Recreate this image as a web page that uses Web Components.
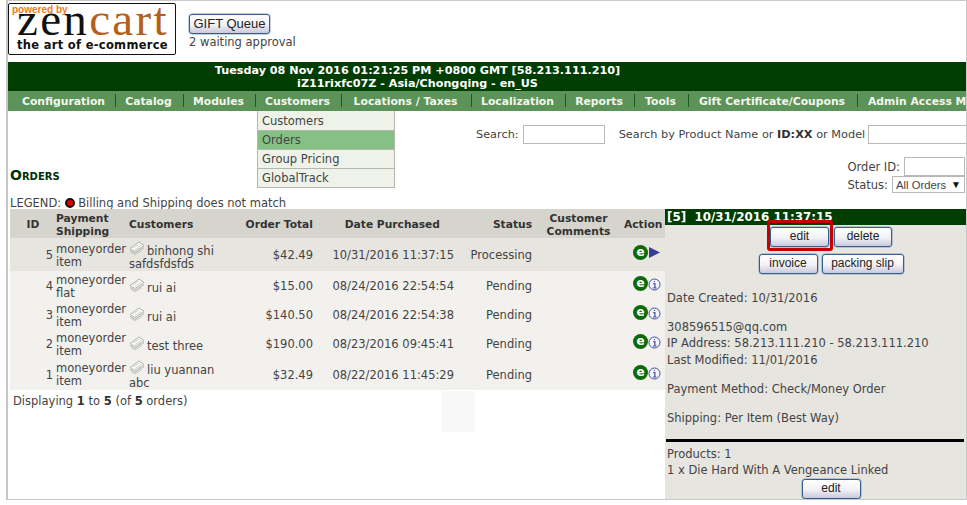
<!DOCTYPE html>
<html lang="en">
  <head>
    <meta charset="UTF-8" />
    <title>Orders</title>
    <style>
      body {
        margin: 0;
        background: #fff;
        font-family: "DejaVu Sans", sans-serif;
        font-size: 11.5px;
        color: #444;
        --cols: 46px 73px 100px 87px 141px 78px 89px 40px;
      }
    </style>
  </head>
  <body>
    <zc-page>
      <zc-header slot="header"></zc-header>
      <zc-status slot="header">
        <div>Tuesday 08 Nov 2016 01:21:25 PM +0800 GMT [58.213.111.210]</div>
        <div>iZ11rixfc07Z - Asia/Chongqing - en_US</div>
      </zc-status>
      <zc-nav slot="header"></zc-nav>
      <zc-filters slot="header"></zc-filters>
      <zc-orders slot="left">
        <zc-row oid="5" pay="moneyorder" ship="item" total="$42.49" date="10/31/2016 11:37:15" status="Processing" icon="arrow" selected style="height:33px">binhong shi safdsfdsfds</zc-row>
        <zc-row oid="4" pay="moneyorder" ship="flat" total="$15.00" date="08/24/2016 22:54:54" status="Pending" style="height:29px">rui ai</zc-row>
        <zc-row oid="3" pay="moneyorder" ship="item" total="$140.50" date="08/24/2016 22:54:38" status="Pending" style="height:29px">rui ai</zc-row>
        <zc-row oid="2" pay="moneyorder" ship="item" total="$190.00" date="08/23/2016 09:45:41" status="Pending" style="height:29px">test three</zc-row>
        <zc-row oid="1" pay="moneyorder" ship="item" total="$32.49" date="08/22/2016 11:45:29" status="Pending" style="height:32px">liu yuannan abc</zc-row>
      </zc-orders>
      <zc-side slot="right"></zc-side>
    </zc-page>

    <template id="page-template">
      <style>
        :host {
          display: block;
          position: relative;
          box-sizing: border-box;
          width: 961px;
          height: 500px;
          margin-left: 6px;
          border: 1px solid #c8c8c8;
          border-width: 1px 1px 1px 2px;
          overflow: hidden;
        }
        .main {
          display: flex;
          align-items: flex-start;
          padding-left: 2px;
        }
        .left {
          flex: 0 0 655px;
        }
        .right {
          flex: 0 0 332px;
        }
        .patch {
          position: absolute;
          left: 434px;
          top: 390px;
          width: 33px;
          height: 41px;
          background: #f8f8f8;
        }
      </style>
      <slot name="header"></slot>
      <div class="main">
        <div class="left"><slot name="left"></slot></div>
        <div class="right"><slot name="right"></slot></div>
      </div>
      <div class="patch"></div>
    </template>

    <template id="button-template">
      <style>
        :host {
          display: inline-block;
          box-sizing: border-box;
          height: 20px;
          line-height: 17px;
          text-align: center;
          border: 1px solid #33618f;
          border-radius: 3px;
          background: linear-gradient(#ffffff, #f1f1f6 55%, #c9c9dc);
          box-shadow: 0 0 0 0.5px #8aa0b8;
          font-family: "Liberation Sans", sans-serif;
          font-size: 12px;
          color: #222;
        }
      </style>
      <slot></slot>
    </template>

    <template id="header-template">
      <style>
        :host {
          display: flex;
          height: 61px;
          box-sizing: border-box;
          padding: 2px 0 0 0;
          gap: 13px;
        }
        .logo {
          position: relative;
          box-sizing: border-box;
          width: 168px;
          height: 52px;
          border: 1px solid #111;
          border-radius: 2px;
          overflow: hidden;
          background: #fff;
        }
        .by {
          position: absolute;
          left: 3px;
          top: 0;
          font: bold 10px "Liberation Sans", sans-serif;
          color: #ef7a22;
        }
        .word {
          position: absolute;
          left: 8px;
          top: -12px;
          font: 47px "Liberation Serif", serif;
          letter-spacing: 2.3px;
          color: #111;
          white-space: nowrap;
        }
        .word span {
          color: #b4601a;
        }
        .tag {
          position: absolute;
          left: 8px;
          top: 34px;
          font: bold 11.5px "DejaVu Sans", sans-serif;
          letter-spacing: 0.3px;
          color: #111;
          white-space: nowrap;
        }
        .gift {
          padding-top: 11px;
        }
        zc-button {
          width: 81px;
          display: block;
          font-size: 13px;
        }
        .wait {
          margin-top: 1px;
        }
      </style>
      <div class="logo">
        <div class="word">zen<span>cart</span></div>
        <div class="by">powered by</div>
        <div class="tag">the art of e-commerce</div>
      </div>
      <div class="gift">
        <zc-button>GIFT Queue</zc-button>
        <div class="wait">2 waiting approval</div>
      </div>
    </template>

    <template id="status-template">
      <style>
        :host {
          display: block;
          box-sizing: border-box;
          height: 29px;
          padding: 3px 139px 0 0;
          background: #003d00;
          color: #fff;
          font-weight: bold;
          font-size: 11.2px;
          line-height: 12.5px;
          text-align: center;
        }
      </style>
      <slot></slot>
    </template>

    <template id="nav-template">
      <style>
        :host {
          display: flex;
          position: relative;
          height: 20px;
          background: #5b9359;
          white-space: nowrap;
          color: #f2f7ee;
          font-weight: bold;
          font-size: 10.8px;
          line-height: 21px;
        }
        .item {
          flex: none;
          box-sizing: border-box;
          padding-right: 3px;
          text-align: center;
          position: relative;
        }
        .item + .item::before {
          content: "";
          position: absolute;
          left: -1px;
          top: 3px;
          bottom: 4px;
          width: 1px;
          background: #1f5a1f;
        }
        .menu {
          position: absolute;
          left: 249px;
          top: 20px;
          width: 138px;
          z-index: 2;
          box-sizing: border-box;
          padding-top: 1px;
          border: 1px solid #b5b8ae;
          border-top: 0;
          color: #444;
          font-weight: normal;
          font-size: 11.5px;
          background: #eef2e8;
        }
        .menu div {
          height: 18px;
          line-height: 18px;
          padding-left: 4px;
          border-bottom: 1px solid #b5b8ae;
        }
        .menu div:last-child {
          border-bottom: 0;
        }
        .menu .on {
          background: #85c085;
        }
      </style>
      <span class="item" style="width:108px;padding-right:0;padding-left:3px">Configuration</span>
      <span class="item" style="width:68px">Catalog</span>
      <span class="item" style="width:72px">Modules</span>
      <span class="item" style="width:86px">Customers</span>
      <span class="item" style="width:130px">Locations / Taxes</span>
      <span class="item" style="width:94px">Localization</span>
      <span class="item" style="width:69px">Reports</span>
      <span class="item" style="width:54px">Tools</span>
      <span class="item" style="width:169px">Gift Certificate/Coupons</span>
      <span class="item" style="padding:0 0 0 10px">Admin Access Management</span>
      <div class="menu">
        <div>Customers</div>
        <div class="on">Orders</div>
        <div>Group Pricing</div>
        <div>GlobalTrack</div>
      </div>
    </template>

    <template id="filters-template">
      <style>
        :host {
          display: block;
          box-sizing: border-box;
          height: 98px;
          padding-top: 14px;
          padding-left: 2px;
        }
        input {
          box-sizing: border-box;
          height: 19px;
          margin: 0;
          padding: 0;
          border: 1px solid #b8b8b8;
          background: #fff;
        }
        .search {
          display: flex;
          align-items: center;
          white-space: nowrap;
          font-size: 11.3px;
        }
        .search .a {
          margin-left: 466px;
          margin-right: 4px;
        }
        .search .b {
          margin-left: 14px;
          margin-right: 3px;
        }
        .search input {
          flex: none;
        }
        .search b {
          color: #333;
        }
        .low {
          display: flex;
          justify-content: space-between;
          margin-top: 13px;
          height: 36px;
        }
        h1 {
          margin: 10px 0 0;
          font: bold small-caps 14px "DejaVu Sans", sans-serif;
          color: #003000;
        }
        .right {
          display: flex;
          flex-direction: column;
          align-items: flex-end;
          width: 118px;
          flex: none;
          margin-right: 1px;
        }
        .line {
          display: flex;
          align-items: center;
          height: 19px;
          white-space: nowrap;
        }
        .line span {
          margin-right: 4px;
        }
        .select {
          box-sizing: border-box;
          display: flex;
          justify-content: space-between;
          align-items: center;
          width: 73px;
          height: 17px;
          padding: 0 3px;
          border: 1px solid #b8b8b8;
          font: 11.3px "Liberation Sans", sans-serif;
        }
        .select i {
          font-style: normal;
          font-size: 10px;
          color: #111;
        }
        .legend {
          display: flex;
          align-items: center;
          margin-top: 3px;
          height: 14px;
          white-space: nowrap;
        }
        .dot {
          width: 6px;
          height: 6px;
          margin: 0 3px 0 4px;
          border-radius: 50%;
          background: #e00000;
          border: 2px solid #111;
        }
      </style>
      <div class="search">
        <span class="a">Search:</span><input style="width:82px" />
        <span class="b">Search by Product Name or <b>ID:XX</b> or Model</span><input style="width:120px" />
      </div>
      <div class="low">
        <h1>Orders</h1>
        <div class="right">
          <div class="line"><span>Order ID:</span><input style="width:61px" /></div>
          <div class="line"><span>Status:</span><div class="select">All Orders<i>▼</i></div></div>
        </div>
      </div>
      <div class="legend">LEGEND:<span class="dot"></span>Billing and Shipping does not match</div>
    </template>

    <template id="orders-template">
      <style>
        :host {
          display: block;
        }
        .head {
          display: grid;
          grid-template-columns: var(--cols);
          align-items: center;
          box-sizing: border-box;
          height: 29px;
          padding-top: 2px;
          background: #d6d5cd;
          color: #333;
          font-weight: bold;
          font-size: 10.7px;
          line-height: 13px;
        }
        .c {
          text-align: center;
        }
        .r {
          text-align: right;
          padding-right: 3px;
        }
        .foot {
          margin: 4px 0 0 3px;
          line-height: 14px;
        }
        .foot b {
          color: #333;
        }
      </style>
      <div class="head">
        <div class="c">ID</div>
        <div>Payment<br />Shipping</div>
        <div>Customers</div>
        <div class="r">Order Total</div>
        <div class="r" style="padding-right:17px">Date Purchased</div>
        <div class="r">Status</div>
        <div class="c" style="padding-right:2px">Customer<br />Comments</div>
        <div class="c" style="padding-right:7px;white-space:nowrap">Action</div>
      </div>
      <slot></slot>
      <div class="foot">Displaying <b>1</b> to <b>5</b> (of <b>5</b> orders)</div>
    </template>

    <template id="row-template">
      <style>
        :host {
          display: grid;
          grid-template-columns: var(--cols);
          align-items: center;
          box-sizing: border-box;
          padding-top: 2px;
          background: #f2f1ee;
          line-height: 13px;
          white-space: nowrap;
        }
        :host([selected]) {
          background: #e6e5e0;
        }
        .r {
          text-align: right;
          padding-right: 3px;
        }
        .id {
          padding-right: 3px;
        }
        .cust {
          white-space: normal;
        }
        .cust svg {
          vertical-align: -1px;
          margin-right: 2px;
        }
        .act {
          display: flex;
          align-items: flex-start;
          padding: 0 0 6px 9px;
        }
        .e {
          width: 15px;
          height: 15px;
          border-radius: 50%;
          background: #0b6b0b;
          color: #fff;
          font: bold 12px/14px "DejaVu Sans", sans-serif;
          text-align: center;
        }
        .mark {
          margin-top: 2px;
        }
      </style>
      <div class="r id"></div>
      <div class="pay"></div>
      <div class="cust">
        <svg width="16" height="15" viewBox="0 0 16 15" fill="#fff" stroke="#b0b0aa" stroke-width="1">
          <path d="M1 7.5 L10 1 L15 4.5 L6 10.5 Z" />
          <path d="M1 9.5 L6 12.5 L15 6.5" fill="none" />
          <path d="M2 11.5 L6 14 L13 9.5" fill="none" stroke="#cfcfc9" />
          <path d="M4 7 L10 3 M6 8.5 L12 4.5" fill="none" stroke="#cfcfc9" />
        </svg><slot></slot>
      </div>
      <div class="r total"></div>
      <div class="r date"></div>
      <div class="r status"></div>
      <div></div>
      <div class="act">
        <div class="e">e</div>
        <span class="mark"></span>
      </div>
    </template>

    <template id="side-template">
      <style>
        :host {
          display: block;
          box-sizing: border-box;
          height: 292px;
          background: #e6e5e0;
          line-height: 16.5px;
        }
        .title {
          height: 16px;
          padding-left: 2px;
          background: #003d00;
          color: #fff;
          font-weight: bold;
          font-size: 11.9px;
          line-height: 17px;
          white-space: pre;
        }
        .btns {
          position: relative;
          display: flex;
          justify-content: center;
          gap: 5px;
          height: 25px;
          padding-top: 2px;
          box-sizing: border-box;
        }
        .btns.one {
          height: 27px;
        }
        .btns.two {
          gap: 4px;
        }
        .mark {
          position: absolute;
          left: 102px;
          top: -5px;
          width: 66px;
          height: 31px;
          box-sizing: border-box;
          border: 3px solid #c40000;
          border-radius: 3px;
        }
        .p {
          padding-left: 2px;
        }
        .gap {
          margin-top: 12px;
        }
        .rule {
          height: 3px;
          margin: 13px 2px 4px 1px;
          width: 298px;
          background: #000;
        }
        .small {
          line-height: 16px;
        }
      </style>
      <div class="title">[5]  10/31/2016 11:37:15</div>
      <div class="btns one">
        <zc-button style="width:59px">edit</zc-button>
        <zc-button style="width:58px">delete</zc-button>
        <div class="mark"></div>
      </div>
      <div class="btns two">
        <zc-button style="width:59px">invoice</zc-button>
        <zc-button style="width:82px">packing slip</zc-button>
      </div>
      <div class="p" style="margin-top:13px">Date Created: 10/31/2016</div>
      <div class="p gap">308596515@qq.com</div>
      <div class="p">IP Address: 58.213.111.210 - 58.213.111.210</div>
      <div class="p">Last Modified: 11/01/2016</div>
      <div class="p" style="margin-top:13px">Payment Method: Check/Money Order</div>
      <div class="p gap">Shipping: Per Item (Best Way)</div>
      <div class="rule"></div>
      <div class="p small">Products: 1</div>
      <div class="p small">1 x Die Hard With A Vengeance Linked</div>
      <div class="btns" style="padding-top:1px">
        <zc-button style="width:59px">edit</zc-button>
      </div>
    </template>

    <script>
      // every element just clones its template into an open shadow root
      class TemplateElement extends HTMLElement {
        constructor() {
          super();
          this.attachShadow({ mode: "open" });
          const template = document.getElementById(this.constructor.templateId);
          this.shadowRoot.appendChild(template.content.cloneNode(true));
        }
      }

      const plain = (name, id) => {
        customElements.define(
          name,
          class extends TemplateElement {
            static templateId = id;
          }
        );
      };

      plain("zc-page", "page-template");
      plain("zc-button", "button-template");
      plain("zc-header", "header-template");
      plain("zc-status", "status-template");
      plain("zc-nav", "nav-template");
      plain("zc-filters", "filters-template");
      plain("zc-orders", "orders-template");
      plain("zc-side", "side-template");

      const ARROW =
        '<svg width="12" height="11" viewBox="0 0 12 11" style="display:block;margin-left:1px"><path d="M0 0 L11 5.5 L0 11 Z" fill="#3a3a92"/></svg>';
      const INFO =
        '<svg width="13" height="13" viewBox="0 0 13 13" style="display:block"><circle cx="6.5" cy="6.5" r="5.5" fill="#f4f4fa" stroke="#3f4f9a"/><path d="M6.5 3 V3.9 M5.2 5.6 H6.9 V10 M5 10 H8.6" fill="none" stroke="#3f4f9a" stroke-width="1.2"/></svg>';

      class Row extends TemplateElement {
        static templateId = "row-template";

        connectedCallback() {
          const root = this.shadowRoot;
          root.querySelector(".id").textContent = this.getAttribute("oid");
          root.querySelector(".pay").innerHTML =
            this.getAttribute("pay") + "<br>" + this.getAttribute("ship");
          root.querySelector(".total").textContent = this.getAttribute("total");
          root.querySelector(".date").textContent = this.getAttribute("date");
          root.querySelector(".status").textContent = this.getAttribute("status");
          root.querySelector(".mark").innerHTML =
            this.getAttribute("icon") === "arrow" ? ARROW : INFO;
        }
      }
      customElements.define("zc-row", Row);
    </script>
  </body>
</html>
